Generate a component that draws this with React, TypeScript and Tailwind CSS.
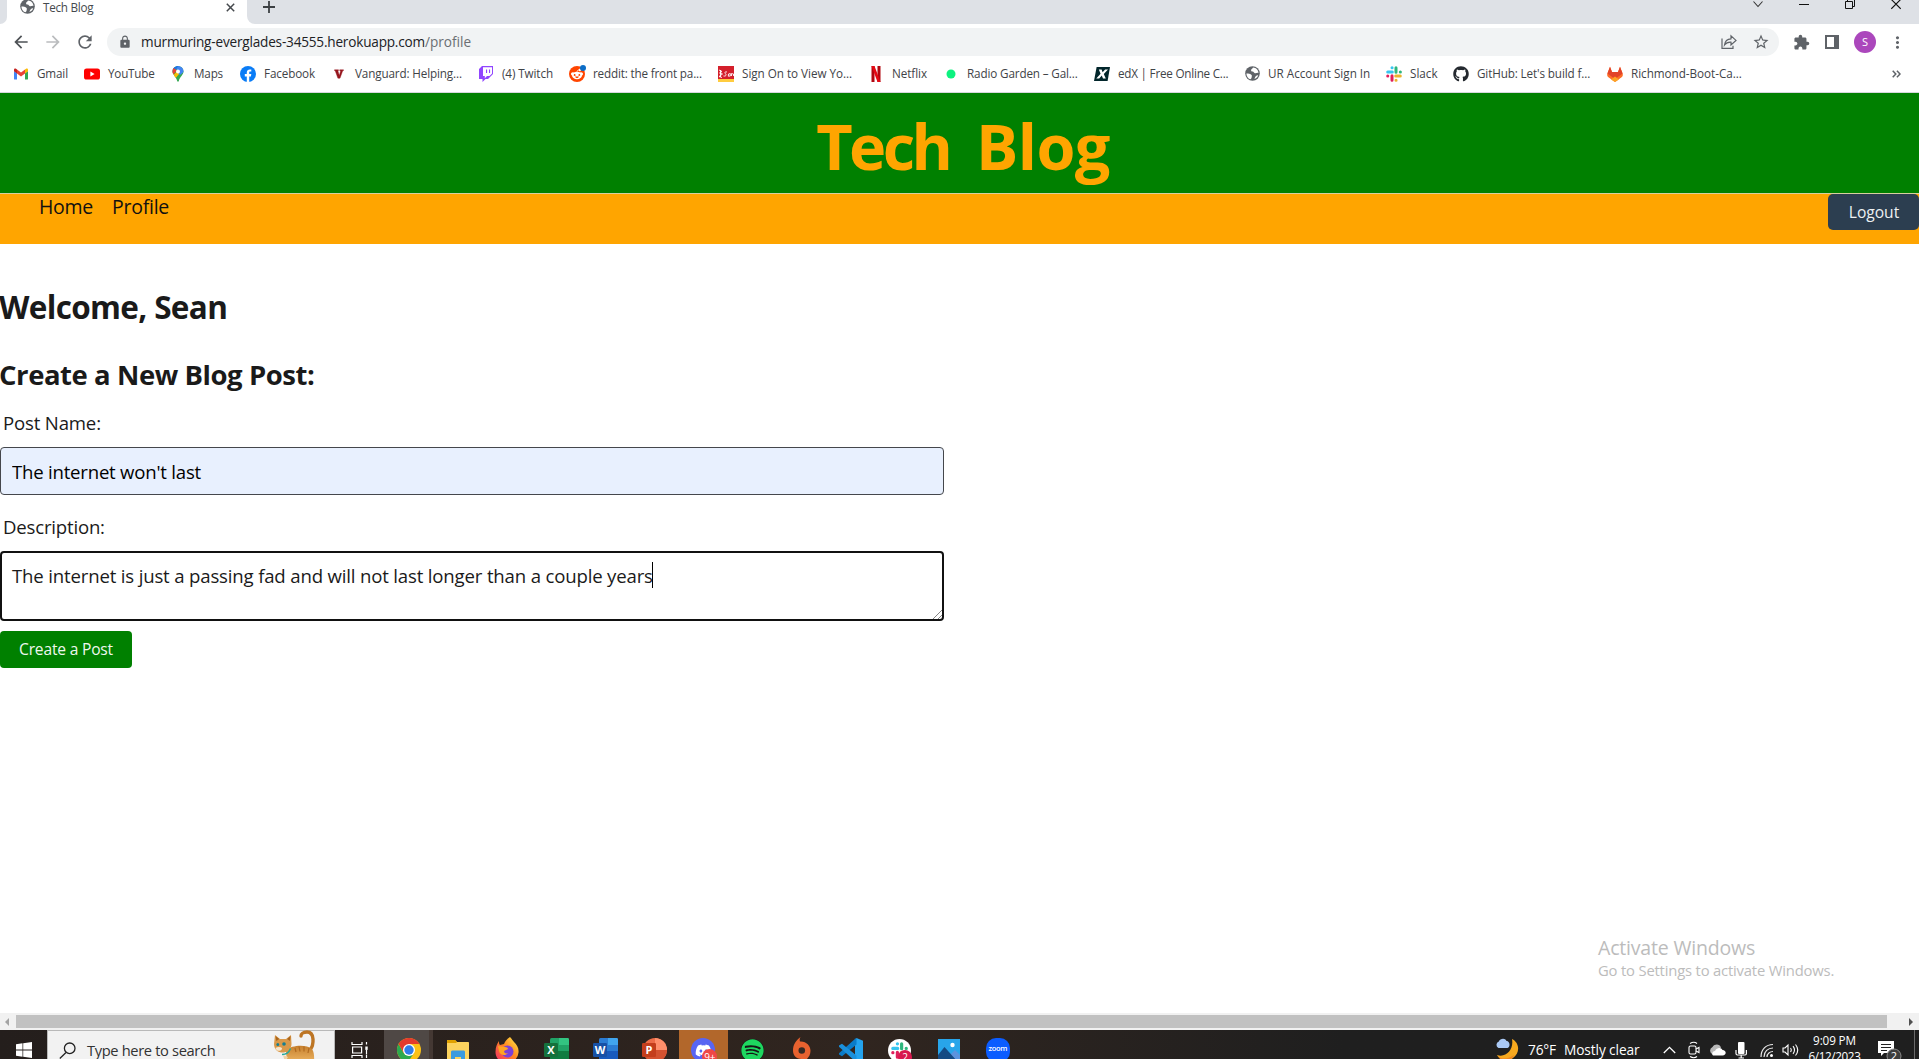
import type { ReactNode } from "react";
import { FaDiscord, FaGithub, FaRedditAlien, FaSpotify } from "react-icons/fa6";
import { MdArrowBack, MdArrowForward, MdExtension, MdLock, MdMoreVert, MdRefresh, MdStarBorder } from "react-icons/md";

/* ---------- Bookmark icons (16px) ---------- */

const GmailIcon = () => (
  <svg width="16" height="16" viewBox="0 0 16 16">
    <path d="M1 13.2V5l3 2.2v6.4H2a1 1 0 0 1-1-.4z" fill="#4285f4" />
    <path d="M12 13.6V7.2L15 5v8a.8.8 0 0 1-.8.6z" fill="#34a853" />
    <path d="M12 3.5l1-.8c.9-.6 2 0 2 1.1V5.2l-3 2.2z" fill="#fbbc04" />
    <path d="M4 3.4l4 3 4-3v4l-4 3-4-3z" fill="#ea4335" />
    <path d="M1 3.8c0-1.1 1.1-1.7 2-1.1l1 .7v4L1 5.2z" fill="#c5221f" />
  </svg>
);

const YouTubeIcon = () => (
  <svg width="16" height="16" viewBox="0 0 16 16">
    <rect x="0" y="2.5" width="16" height="11" rx="2.6" fill="#f00" />
    <path d="M6.4 5.5v5L10.6 8z" fill="#fff" />
  </svg>
);

const MapsIcon = () => (
  <svg width="16" height="16" viewBox="0 0 16 16">
    <defs>
      <clipPath id="pin">
        <path d="M8 0a5.5 5.5 0 0 1 5.5 5.5c0 3.5-3.7 5-4.7 9.6-.2 1-1.4 1-1.6 0C6.2 10.5 2.5 9 2.5 5.5A5.5 5.5 0 0 1 8 0z" />
      </clipPath>
    </defs>
    <g clipPath="url(#pin)">
      <rect width="16" height="16" fill="#34a853" />
      <path d="M0 13L10 2l2.500 2L4 14z" fill="#fbbc04" />
      <path d="M6 0h10v4L10 9 7 6z" fill="#4285f4" />
      <path d="M0 0h8.500l-5 6L0 4z" fill="#1a73e8" />
      <path d="M0 3l3-1.500 4 3L2 10z" fill="#ea4335" />
    </g>
    <circle cx="8" cy="5.5" r="2" fill="#fff" />
  </svg>
);

const FacebookIcon = () => (
  <svg width="16" height="16" viewBox="0 0 16 16">
    <circle cx="8" cy="8" r="8" fill="#0a7cf6" />
    <path d="M6.800 16v-5.600h-2V8.100h2V6.500c0-2 1.200-3.100 3-3.100.8 0 1.500.1 1.500.1v2h-.9c-1 0-1.200.6-1.200 1.200v1.400h2.100l-.4 2.300H9.200V16z" fill="#fff" />
  </svg>
);

const VanguardIcon = () => (
  <svg width="16" height="16" viewBox="0 0 16 16">
    <path d="M3.500 3.800h4v.8l-.6.200 1.400 4.600 1.300-4.400-.9-.4v-.8h3.800v.7l-.8.3-2.700 7.400H6.900L4.200 4.700l-.7-.2z" fill="#96151d" stroke="#96151d" strokeWidth=".4" />
  </svg>
);

const TwitchIcon = () => (
  <svg width="16" height="16" viewBox="0 0 16 16">
    <path d="M4 0L1 3v10h3.500v3l3-3H10l5-5V0z" fill="#9146ff" />
    <path d="M5 1.200h9v6.300l-2.500 2.500H9l-2.200 2.200V10H5z" fill="#fff" />
    <path d="M8 3.500h1.100V7H8zM11 3.500h1.100V7H11z" fill="#9146ff" />
  </svg>
);

const RedditIcon = () => (
  <span className="relative block size-4 rounded-full bg-[#ff4500]">
    <FaRedditAlien className="absolute left-0.5 top-0.5 text-white" size={12} />
    <span className="absolute -right-px -top-px size-1.5 rounded-full bg-[#0b6dc7]" />
  </span>
);

const SignOnIcon = () => (
  <svg width="16" height="16" viewBox="0 0 16 16">
    <rect width="16" height="13" fill="#d41f2b" />
    <rect y="13" width="16" height="3" fill="#ffcc3f" />
    <path d="M1 4l3 1.500L1.500 7l3 1L1 10.500l3 1M2.500 4v7M9 6c-2-.5-3 1-1.500 1.800S8 10.500 5.500 10M10.500 8l1.800-.5v2.500l-2 .2zM13.500 10V7.500l2 .5v2" fill="none" stroke="#fff" strokeWidth=".9" />
  </svg>
);

const NetflixIcon = () => (
  <svg width="16" height="16" viewBox="0 0 16 16">
    <path d="M3.500 0h3v16l-3 0zM9.500 0h3v16h-3z" fill="#b1060f" />
    <path d="M3.500 0h3l6 16h-3z" fill="#e50914" />
  </svg>
);

const RadioIcon = () => (
  <svg width="16" height="16" viewBox="0 0 16 16">
    <circle cx="8" cy="8" r="4.5" fill="#0df27f" />
  </svg>
);

const EdxIcon = () => (
  <svg width="16" height="16" viewBox="0 0 16 16">
    <path d="M2.600 1H16l-2.400 14H0z" fill="#02262b" />
    <path d="M4.800 3.500h2.800l1 2.800 2.500-2.800H14L9.800 8l2 4.500H9L7.800 9.600 5.200 12.500H2.300l4.300-4.700z" fill="#fff" />
  </svg>
);

/* Filled disc with the light land masses of Chrome's placeholder favicon. */
const GlobeIcon = () => (
  <svg width="15" height="15" viewBox="0 0 15 15">
    <circle cx="7.5" cy="7.5" r="7.3" fill="#5f6368" />
    <path d="M1.400 7.500c2 0 4.200.3 5.200 1.500.6.800 0 1.800 0 2.600 0 .7-.6 1.500-1.400 1.700C3 12.500 1.300 10 1.400 7.500zM8 1.400c-.3 1.200-1.700 1.300-1.900 2.500-.1 1 .4 1.600 1.600 1.600 1.100 0 1 1.500 2.200 1.700 1.400.2 2.200-.6 3.600-.3C13.400 4 11.200 1.500 8 1.400zM9.500 12.900c2-.6 3.200-2 3.700-3.600-1.800-.2-3.300 1.600-3.700 3.600z" fill="#fff" />
  </svg>
);

const SlackMark = ({ size }: { size: number }) => (
  <svg width={size} height={size} viewBox="0 0 16 16" strokeWidth="3" strokeLinecap="round" fill="none">
    <path d="M1.700 6h4.600M6 1.700h.1" stroke="#36c5f0" />
    <path d="M10 1.700v4.600M14.300 6h.1" stroke="#2eb67d" />
    <path d="M9.700 10h4.600M10 14.300h.1" stroke="#ecb22e" />
    <path d="M6 9.700v4.600M1.700 10h.1" stroke="#e01e5a" />
  </svg>
);

const GitlabIcon = () => (
  <svg width="16" height="16" viewBox="0 0 16 16">
    <path d="M3 .8L.4 7.500c-.6 1.700 0 3 1 3.800L8 16l6.600-4.700c1-.8 1.600-2.100 1-3.800L13 .8l-2 5.200H5z" fill="#fc6d26" />
    <path d="M3 .8L.4 7.500 8 13l7.600-5.500L13 .8l-2 5.200H5z" fill="#e24329" />
    <path d="M8 10.500l-4 3L8 16l4-2.500z" fill="#fca326" />
  </svg>
);

const bookmarks: { label: string; icon: ReactNode; style: string }[] = [
  { label: "Gmail", icon: <GmailIcon />, style: "w-[71px] tracking-[-0.15px]" },
  { label: "YouTube", icon: <YouTubeIcon />, style: "w-[86px] tracking-[-0.22px]" },
  { label: "Maps", icon: <MapsIcon />, style: "w-[70px] tracking-[-0.18px]" },
  { label: "Facebook", icon: <FacebookIcon />, style: "w-[91px] tracking-[-0.13px]" },
  { label: "Vanguard: Helping...", icon: <VanguardIcon />, style: "w-[147px] tracking-[-0.14px]" },
  { label: "(4) Twitch", icon: <TwitchIcon />, style: "w-[91px] tracking-[-0.1px]" },
  { label: "reddit: the front pa...", icon: <RedditIcon />, style: "w-[149px] tracking-[-0.17px]" },
  { label: "Sign On to View Yo...", icon: <SignOnIcon />, style: "w-[150px] tracking-[-0.03px]" },
  { label: "Netflix", icon: <NetflixIcon />, style: "w-[75px] tracking-[-0.07px]" },
  { label: "Radio Garden – Gal...", icon: <RadioIcon />, style: "w-[151px] tracking-[-0.14px]" },
  { label: "edX | Free Online C...", icon: <EdxIcon />, style: "w-[150px] tracking-[-0.23px]" },
  { label: "UR Account Sign In", icon: <GlobeIcon />, style: "w-[142px]" },
  { label: "Slack", icon: <SlackMark size={16} />, style: "w-[67px]" },
  { label: "GitHub: Let's build f...", icon: <FaGithub size={16} color="#24292f" />, style: "w-[154px] tracking-[-0.13px]" },
  { label: "Richmond-Boot-Ca...", icon: <GitlabIcon />, style: "w-[150px] tracking-[-0.03px]" },
];

/* ---------- Browser chrome ---------- */

function TabStrip() {
  return (
    <div className="flex h-6 shrink-0 bg-[#dee1e6]">
      <div className="w-[7px] bg-white">
        <div className="h-6 rounded-br-lg bg-[#dee1e6]" />
      </div>
      <div className="flex h-6 w-[240px] items-start bg-white pl-[12px]">
        <span className="-mt-px ml-px"><GlobeIcon /></span>
        <span className="-mt-px ml-[8px] text-[11.7px] leading-4 tracking-[-0.25px] text-[#45494d]">Tech Blog</span>
        <svg className="ml-auto mr-[12px] mt-[3px]" width="9" height="9" viewBox="0 0 9 9" stroke="#45494d" strokeWidth="1.5">
          <path d="M.8.8l7.400 7.400M8.200.8L.8 8.200" />
        </svg>
      </div>
      <div className="w-2 bg-white">
        <div className="h-6 rounded-bl-lg bg-[#dee1e6]" />
      </div>
      <svg className="ml-[8px] mt-px" width="12" height="12" viewBox="0 0 12 12" stroke="#3c4043" strokeWidth="1.8">
        <path d="M6 0v12M0 6h12" />
      </svg>
      <div className="ml-auto mr-[18px] flex gap-[36px]">
        <svg width="10" height="10" viewBox="0 0 10 10" fill="none" stroke="#333" strokeWidth="1.1">
          <path d="M.5 1.500L5 6.500l4.500-5" />
        </svg>
        <svg width="10" height="10" viewBox="0 0 10 10" stroke="#111" strokeWidth="1">
          <path d="M0 4.500h10" />
        </svg>
        <svg width="10" height="10" viewBox="0 0 10 10" fill="none" stroke="#111" strokeWidth="1">
          <path d="M.5 1.500h7v7h-7zM2.500 1V-.5M2.500-.5h7v7H8" />
        </svg>
        <svg width="10" height="10" viewBox="0 0 10 10" stroke="#111" strokeWidth="1.1">
          <path d="M.3-.6l9.400 9.400M9.700-.6L.3 8.800" />
        </svg>
      </div>
    </div>
  );
}

function AddressRow() {
  return (
    <div className="mt-1 flex h-7 shrink-0 items-center text-[#5f6368]">
      <MdArrowBack size={20} className="ml-[11px]" color="#4e5256" />
      <MdArrowForward size={20} className="ml-[12px]" color="#babcbe" />
      <MdRefresh size={20} className="ml-[12px]" />
      <div className="ml-[12px] flex h-7 w-[1672px] items-center rounded-full bg-[#f1f3f4] pl-[11px] pr-[9px]">
        <MdLock size={14} />
        <span className="ml-[9px] text-[13.6px] tracking-[-0.2px] text-[#202124]">murmuring-everglades-34555.herokuapp.com</span>
        <span className="text-[13.6px] text-[#6b6f73]">/profile</span>
        <svg className="ml-auto" width="16" height="16" viewBox="0 0 16 16" fill="none" stroke="#5f6368" strokeWidth="1.2">
          <path d="M1 4.500v9.800h11v-2.500M3.500 11C4 7 6.500 5 10 4.800V1.800l5 4.600-5 4.600V8.200C7 8 5 9 3.500 11z" />
        </svg>
        <MdStarBorder size={18} className="ml-[15px]" />
      </div>
      <MdExtension size={17} className="ml-[14px]" />
      <svg className="ml-[15px]" width="14" height="14" viewBox="0 0 14 14">
        <path fillRule="evenodd" d="M0 0h14v14H0zM2 2v10h7V2z" fill="#5f6368" />
      </svg>
      <div className="ml-[15px] flex size-[22px] items-center justify-center rounded-full bg-[#ab47bc] text-[11px] text-white">S</div>
      <MdMoreVert size={19} className="ml-[12px]" />
    </div>
  );
}

function BookmarksBar() {
  return (
    <div className="flex h-9 shrink-0 items-center pl-[13px] pr-[18px] text-[11.7px] text-[#3f4347]">
      {bookmarks.map((b) => (
        <div key={b.label} className={"flex shrink-0 items-center gap-2 whitespace-nowrap " + b.style}>
          <span className="flex size-4 shrink-0 items-center justify-center">{b.icon}</span>
          {b.label}
        </div>
      ))}
      <svg className="ml-auto" width="9" height="8" viewBox="0 0 9 8" fill="none" stroke="#5f6368" strokeWidth="1.5">
        <path d="M.7.8L3.800 4 .7 7.200M4.900.8L8 4 4.900 7.200" />
      </svg>
    </div>
  );
}

/* ---------- Blog page ---------- */

function BlogPage() {
  return (
    <main className="flex min-h-0 flex-1 flex-col bg-white text-[#1a1a1a]">
      <header className="flex h-[100px] shrink-0 items-center justify-center bg-[green] pl-[7px] pt-[5px]">
        <h1 className="text-[63px] font-bold leading-none tracking-[-0.6px] text-[orange]">
          <span className="tracking-[-3.6px]">Tec</span>h<span className="[word-spacing:8px]"> </span>Blog
        </h1>
      </header>
      <nav className="flex h-[51px] shrink-0 items-start border-t border-[#d8cf9e] bg-[orange]">
        <a className="ml-[39px] text-[19.5px] leading-[25px] tracking-[-0.27px] text-[#111]">Home</a>
        <a className="ml-[19px] text-[19.5px] leading-[25px] tracking-[-0.26px] text-[#111]">Profile</a>
        <button className="ml-auto h-9 w-[91px] rounded-[5px] bg-[#2c3e50] pl-px pt-[2px] text-[15.6px] text-[#eef1f3]">Logout</button>
      </nav>
      <h2 className="-ml-px mt-[43px] text-[31.5px] font-bold leading-10 tracking-[-0.66px]">Welcome, Sean</h2>
      <h3 className="-ml-px mt-[28px] text-[27.5px] font-bold leading-10 tracking-[-0.44px]">Create a New Blog Post:</h3>
      <form className="flex w-[944px] flex-col items-start">
        <label className="ml-[3px] mt-[14px] text-[18.6px] leading-7 tracking-[-0.17px]">Post Name:</label>
        <input
          readOnly
          value="The internet won't last"
          className="mt-[10px] h-12 w-full rounded-[4px] border border-[#45474c] bg-[#e8f0fe] px-[11px] text-[18.6px] tracking-[-0.22px] text-black outline-none"
        />
        <label className="ml-[3px] mt-[18px] text-[18.6px] leading-7 tracking-[-0.2px]">Description:</label>
        <div className="relative mt-[10px] h-[70px] w-full">
          <textarea
            readOnly
            value="The internet is just a passing fad and will not last longer than a couple years"
            className="block h-full w-full resize-none overflow-hidden rounded-[4px] border-2 border-[#111] px-[10px] pt-[9px] text-[18.6px] leading-7 tracking-[-0.17px] outline-none"
          />
          <span className="absolute left-[652px] top-[11px] h-[26px] w-px bg-black" />
          <svg className="absolute bottom-[2px] right-[2px]" width="9" height="9" viewBox="0 0 9 9" stroke="#666" strokeWidth=".8">
            <path d="M0 9l9-9M5 9l4-4" />
          </svg>
        </div>
        <button type="button" className="mt-[10px] h-[37px] w-[132px] rounded-[4px] bg-[green] pt-px text-[15.6px] tracking-[-0.2px] text-[#eef7ee]">
          Create a Post
        </button>
      </form>
      <div className="mb-[32px] ml-auto mt-auto w-[321px] text-[#bcbcbc]">
        <p className="text-[19.5px] leading-[24px] tracking-[-0.19px]">Activate Windows</p>
        <p className="text-[14.8px] leading-[21px] tracking-[-0.18px]">Go to Settings to activate Windows.</p>
      </div>
      <div className="flex h-[17px] shrink-0 items-center bg-[#f1f1f1] pl-[5px] pr-[6px]">
        <svg width="4" height="8" viewBox="0 0 4 8"><path d="M4 0v8L0 4z" fill="#a3a3a3" /></svg>
        <div className="ml-[7px] h-[13px] w-[1871px] bg-[#c1c1c1]" />
        <svg className="ml-auto" width="4" height="8" viewBox="0 0 4 8"><path d="M0 0v8l4-4z" fill="#505050" /></svg>
      </div>
    </main>
  );
}

/* ---------- Taskbar ---------- */

const CatArt = () => (
  <svg width="46" height="40" viewBox="0 0 46 40">
    <defs>
      <linearGradient id="fur" x1="0" y1="0" x2="0" y2="1">
        <stop offset="0" stopColor="#c67f2c" />
        <stop offset=".6" stopColor="#e8ae5c" />
        <stop offset="1" stopColor="#d08a33" />
      </linearGradient>
    </defs>
    <path d="M39 20c4-5 5-18-3-18-4 0-6 2-6 4" fill="none" stroke="#bd7524" strokeWidth="3.4" strokeLinecap="round" />
    <path d="M15 20c6-5 20-6 26-1 3 4 2 11 2 21H19c1-5-4-8-4-20z" fill="url(#fur)" />
    <path d="M24 18l1 4M28 16.500l1 5M33 16.500l0 5M38 18l-1 5" stroke="#b06a20" strokeWidth="1.2" />
    <path d="M4 5l5 4h6l5-4 .5 9c0 6-5 8.500-9 8.500S3 20 3 14z" fill="#d9994a" />
    <path d="M4.500 6l.8 5 3-2zM19.500 6l-3.500 3 3 2z" fill="#a9661f" />
    <ellipse cx="6.8" cy="14.5" rx="1.4" ry="1.6" fill="#157f92" />
    <ellipse cx="13" cy="14" rx="1.8" ry="1.7" fill="#157f92" />
    <path d="M4.500 18c2-1.500 5-1.500 6.500 0 .5 3-5.500 4.500-6.500 0z" fill="#f8e6cd" />
    <path d="M11 24.500c4 0 7-2 8.500-6" fill="none" stroke="#25a898" strokeWidth="1.5" />
    <path d="M12 25l2 7 3-5z" fill="#f0d3a4" />
  </svg>
);

const TaskViewIcon = () => (
  <svg width="18" height="18" viewBox="0 0 18 18" fill="none" stroke="#fff" strokeWidth="1.2">
    <path d="M1 1v2.500h10V1M1 17v-2.500h10V17M1.600 6h9v6h-9zM15.500 1v2.500M15.500 13.500V17" />
    <rect x="14.3" y="5.5" width="2.4" height="3.4" fill="#fff" stroke="none" />
    <path d="M15.500 9v4" />
  </svg>
);

const ChromeIcon = () => (
  <svg className="ml-[5px]" width="24" height="24" viewBox="0 0 24 24">
    <circle cx="12" cy="12" r="12" fill="#fbc116" />
    <path d="M1.600 6a12 12 0 0 0 9.400 18l6-9-5 3-5.400-3z" fill="#2da94f" />
    <path d="M1.600 6A12 12 0 0 1 22.400 6H12L6.800 15z" fill="#e33b2e" />
    <circle cx="12" cy="12" r="6" fill="#fff" />
    <circle cx="12" cy="12" r="4.7" fill="#2f7de9" />
  </svg>
);

const ExplorerIcon = () => (
  <svg width="22" height="22" viewBox="0 0 22 22">
    <path d="M0 2c0-.6.4-1 1-1h7l2 2h11c.6 0 1 .4 1 1v16H0z" fill="#fcd35e" />
    <path d="M0 2c0-.6.4-1 1-1h7l2 2-1 1H0z" fill="#e0a100" />
    <path d="M4 22v-9c0-1 .7-1.500 1.500-1.500h11c.8 0 1.500.5 1.500 1.500v9h-4v-4H8v4z" fill="#3a9be0" />
  </svg>
);

const FirefoxIcon = () => (
  <svg width="24" height="26" viewBox="0 0 24 26">
    <defs>
      <linearGradient id="fox" x1="1" y1="0" x2="0" y2="1">
        <stop offset="0" stopColor="#fff04d" />
        <stop offset=".45" stopColor="#ff8a1f" />
        <stop offset="1" stopColor="#f0246e" />
      </linearGradient>
    </defs>
    <path d="M15 0c2 2 3 4 4 5 3 3 5 6 4.500 10.500A11.500 11.500 0 0 1 12 26C5 26 .5 21 .5 15 .5 10 2 7 4 4c0 2 0 3 1 4l4-1c1-3 3-5 6-7z" fill="url(#fox)" />
    <circle cx="12.5" cy="14.5" r="6" fill="#7a40d8" />
    <path d="M3 9l7 1c2 0 3 1 3 2l-4 2c0 2 2 3 4 2-2 3-8 3-9-2z" fill="#ffa423" />
  </svg>
);

const OfficeIcon = ({ letter, light, mid, dark, box }: { letter: string; light: string; mid: string; dark: string; box: string }) => (
  <svg className="ml-px" width="25" height="24" viewBox="0 0 25 24">
    <rect x="6" y="0" width="19" height="24" rx="1.5" fill={mid} />
    <path d="M15 0h8.500c.8 0 1.500.7 1.500 1.500V7H15z" fill={light} />
    <path d="M6 13h19v11H6z" fill={dark} />
    <rect x="0" y="5" width="14" height="14" rx="1.2" fill={box} />
    <text x="7" y="16" textAnchor="middle" fontFamily="Open Sans, sans-serif" fontSize="11" fontWeight="700" fill="#fff">{letter}</text>
  </svg>
);

const PowerPointIcon = () => (
  <svg className="ml-px" width="25" height="24" viewBox="0 0 25 24">
    <circle cx="13" cy="12" r="12" fill="#ed6c47" />
    <path d="M13 0a12 12 0 0 1 12 12H13z" fill="#ff8f6b" />
    <path d="M1 12h24a12 12 0 0 1-24 0z" fill="#d35230" />
    <rect x="0" y="5" width="14" height="14" rx="1.2" fill="#c43e1c" />
    <text x="7" y="16" textAnchor="middle" fontFamily="Open Sans, sans-serif" fontSize="11" fontWeight="700" fill="#fff">P</text>
  </svg>
);

const DiscordIcon = () => (
  <span className="relative flex size-6 items-center justify-center rounded-full bg-[#5865f2]">
    <FaDiscord size={17} color="#fff" />
    <span className="absolute left-[11px] top-[11px] flex size-[15px] items-center justify-center rounded-full bg-[#f04747] text-[10px] leading-none tracking-[-0.3px] text-white">9+</span>
  </span>
);

const OriginIcon = () => (
  <svg className="ml-px" width="20" height="26" viewBox="0 0 20 26">
    <path d="M8.500 0c-1 2-1 3-.5 4.500 6-.5 10.500 4 10.500 9.300C18.500 20 14 23.500 10 25c.5-1 .8-2 .6-3C4.500 22.300 1 18.500 1 13.500 1 7 4.500 3 8.500 0z" fill="#e8622f" />
    <circle cx="9.800" cy="13.500" r="3.300" fill="#352a24" />
  </svg>
);

const VsCodeIcon = () => (
  <svg className="ml-px" width="24" height="24" viewBox="0 0 24 24">
    <path d="M17.500 0L24 2.800v18.400L17.500 24 16 22V2z" fill="#24a3ee" />
    <path d="M17.500 0v6.500L3 18.300 0 16.500v-1.200L16.500.4z" fill="#0a7bc8" />
    <path d="M17.500 24v-6.500L3 5.700 0 7.500v1.200l16.500 14.900z" fill="#1a90dc" />
  </svg>
);

const SlackAppIcon = () => (
  <span className="relative flex size-[23px] items-center justify-center rounded-full bg-white">
    <SlackMark size={17} />
    <span className="absolute left-[10px] top-[11px] flex size-[14px] items-center justify-center rounded-full bg-[#d8194f] text-[10px] leading-none text-white">2</span>
  </span>
);

const PhotosIcon = () => (
  <svg width="22" height="22" viewBox="0 0 22 22">
    <rect width="22" height="22" fill="#28a5ea" />
    <path d="M10 18l7-7 5 5v6H10z" fill="#5c93dd" />
    <path d="M0 16l6.500-8L19 22H0z" fill="#144a83" />
    <circle cx="14.500" cy="6" r="2.200" fill="#fff" />
  </svg>
);

const ZoomIcon = () => (
  <span className="flex size-6 items-center justify-center rounded-[10px] bg-[#0b5cff] pb-[2px] text-[7.5px] font-semibold leading-none tracking-[-0.4px] text-white">zoom</span>
);

const apps: { name: string; icon: ReactNode; tile?: string }[] = [
  { name: "Task View", icon: <TaskViewIcon /> },
  { name: "Chrome", icon: <ChromeIcon />, tile: "bg-[#4f4845] border-r-[4px] border-[#443833]" },
  { name: "Explorer", icon: <ExplorerIcon /> },
  { name: "Firefox", icon: <FirefoxIcon /> },
  { name: "Excel", icon: <OfficeIcon letter="X" light="#33c481" mid="#21a366" dark="#107c41" box="#15713c" /> },
  { name: "Word", icon: <OfficeIcon letter="W" light="#41a5ee" mid="#2b7cd3" dark="#185abd" box="#1751a6" /> },
  { name: "PowerPoint", icon: <PowerPointIcon /> },
  { name: "Discord", icon: <DiscordIcon />, tile: "bg-[#b2672b]" },
  { name: "Spotify", icon: <span className="rounded-full bg-[#151515]"><FaSpotify size={23} color="#1ed760" /></span> },
  { name: "Origin", icon: <OriginIcon /> },
  { name: "VS Code", icon: <VsCodeIcon /> },
  { name: "Slack", icon: <SlackAppIcon /> },
  { name: "Photos", icon: <PhotosIcon /> },
  { name: "Zoom", icon: <ZoomIcon /> },
];

const WeatherIcon = () => (
  <svg width="24" height="24" viewBox="0 0 24 24">
    <path d="M17 1c8 4 8 14 1 19-5 4-13 3-16-3 9 3 17-5 15-16z" fill="#f6a81e" />
    <path d="M3 18c4 4 11 3 16-1-2 6-12 9-16 1z" fill="#ee8420" />
    <path d="M3.500 10a3.500 3.500 0 0 1 .3-6.500C5 .5 10-.5 11.500 3c3-.3 4.500 5.500 1 7z" fill="#a9c8f4" />
  </svg>
);

function Tray() {
  return (
    <div className="flex h-10 shrink-0 items-center text-white">
      <WeatherIcon />
      <span className="ml-[9px] w-[36px] text-[13.7px] tracking-[-0.15px]">76°F</span>
      <span className="w-[99px] whitespace-nowrap text-[13.7px] tracking-[-0.1px]">Mostly clear</span>
      <svg width="13" height="8" viewBox="0 0 13 8" fill="none" stroke="#fff" strokeWidth="1.3"><path d="M.8 7l5.700-5.700L12.200 7" /></svg>
      <svg className="ml-[12px]" width="12" height="18" viewBox="0 0 12 18" fill="none" stroke="#fff" strokeWidth="1.1">
        <rect x="1" y="5" width="7" height="8" rx="1.5" />
        <path d="M8 8l3-1.500v5L8 10M2 2.500q4-2.500 7 0M2 15.500q4 2.500 7 0" />
      </svg>
      <svg className="ml-[9px]" width="17" height="12" viewBox="0 0 17 12">
        <path d="M4 10.500a4 4 0 0 1-.5-7.500C6-.8 11 .2 12 3.500l-6 7z" fill="#b8b8b8" />
        <path d="M4 11.500c-2-2 0-4.500 2-4.500C8 3 12.500 3.500 13.500 6c4 0 4.500 5.500 0 5.500z" fill="#fff" />
      </svg>
      <svg className="ml-[9px]" width="12" height="17" viewBox="0 0 12 17">
        <rect x="3" y="0" width="6.500" height="12" rx="1" fill="#fff" />
        <path d="M1 8v3.500c0 1 .6 1.500 1.500 1.500h7.500c1 0 1.400-.5 1.400-1.500V8M6.200 13v3M3.500 16h5.500" fill="none" stroke="#fff" strokeWidth="1.2" />
      </svg>
      <svg className="ml-[13px]" width="14" height="15" viewBox="0 0 14 15" fill="none" stroke="#e8e8e8" strokeWidth="1.2">
        <path d="M1 14C1 6.500 6 1.500 13 1.500M4 14c0-5.500 4-9 9-9M7 14c0-3.500 3-5.500 6-5.500" />
        <circle cx="11.500" cy="12.500" r="1.500" fill="#fff" stroke="none" />
      </svg>
      <svg className="ml-[8px]" width="17" height="14" viewBox="0 0 17 14" fill="none" stroke="#fff" strokeWidth="1.1">
        <path d="M1 5v4h2l3 3V2L3 5zM8.500 5q1.500 2 0 4M11 3.200q3 3.800 0 7.600M13.500 1.500q4.500 5.500 0 11" />
      </svg>
      <div className="-mt-1 ml-[6px] w-[59px] text-center text-[11.7px] leading-4">
        <div className="tracking-[-0.12px]">9:09 PM</div>
        <div className="tracking-[-0.38px]">6/12/2023</div>
      </div>
      <svg className="ml-[14px] mt-1" width="26" height="22" viewBox="0 0 26 22">
        <path d="M0 0h16v12H6l-3 3v-3H0z" fill="#fff" />
        <path d="M3 3.500h10M3 6.500h10M3 9.500h6" stroke="#222" strokeWidth="1.1" />
        <circle cx="16" cy="15" r="7" fill="#3d3d3d" stroke="#8a8a8a" strokeWidth="1" />
        <text x="16" y="19" textAnchor="middle" fontFamily="Open Sans, sans-serif" fontSize="11" fill="#fff">2</text>
      </svg>
      <div className="ml-[10px] mr-[4px] h-10 w-px bg-[#6b6b6b]" />
    </div>
  );
}

function Taskbar() {
  return (
    <footer className="flex h-[29px] shrink-0 items-start overflow-hidden bg-linear-to-r from-[#241e1c] via-[#30251f] via-45% to-[#1f1f1f] to-70%">
      <div className="flex h-10 w-[47px] shrink-0 items-center justify-center">
        <svg width="16" height="16" viewBox="0 0 16 16" fill="#fff">
          <path d="M0 2.200l6.500-.9v6.300H0zM7.200 1.200L16 0v7.600H7.200zM0 8.400h6.500v6.300L0 13.800zM7.200 8.400H16V16l-8.800-1.200z" />
        </svg>
      </div>
      <div className="flex h-10 w-[288px] shrink-0 items-center border border-[#b9b9b9] bg-[#f2f2f2] pl-[11px]">
        <svg width="17" height="17" viewBox="0 0 17 17" fill="none" stroke="#222" strokeWidth="1.3">
          <circle cx="10.700" cy="6.300" r="5.300" />
          <path d="M7 10.500L.8 16.500" />
        </svg>
        <span className="ml-[11px] whitespace-nowrap text-[14.7px] tracking-[-0.36px] text-[#333]">Type here to search</span>
        <span className="ml-auto mr-[17px]"><CatArt /></span>
      </div>
      <div className="flex h-10 shrink-0">
        {apps.map((a) => (
          <div key={a.name} className={"flex h-10 w-[49.1px] shrink-0 items-center justify-center " + (a.tile ?? "")}>
            {a.icon}
          </div>
        ))}
      </div>
      <div className="flex-1" />
      <Tray />
    </footer>
  );
}

export default function App() {
  return (
    <div className="flex h-[1059px] w-[1919px] flex-col overflow-hidden bg-white font-['Open_Sans','Noto_Sans',sans-serif]">
      <TabStrip />
      <AddressRow />
      <BookmarksBar />
      <div className="h-px shrink-0 bg-[#d5d8dc]" />
      <BlogPage />
      <Taskbar />
    </div>
  );
}
